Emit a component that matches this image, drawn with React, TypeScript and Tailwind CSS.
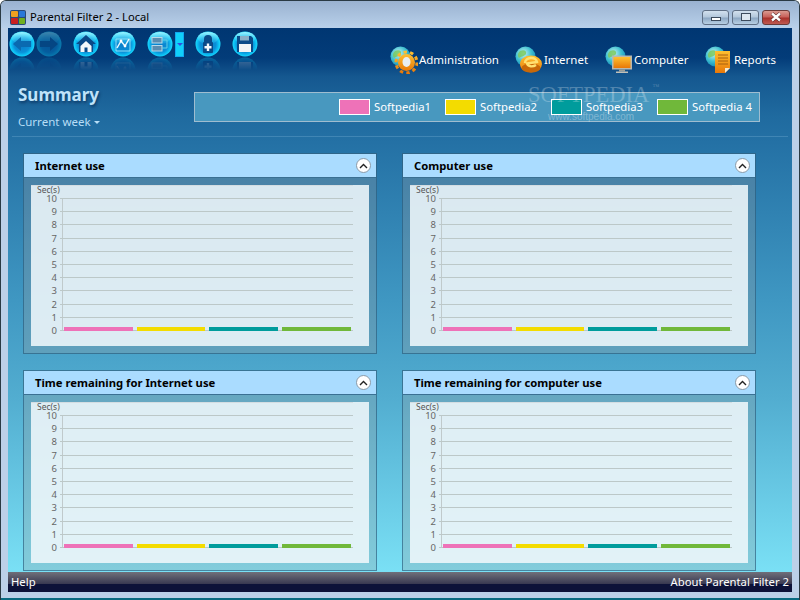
import type { ReactNode } from "react";

const legend = [
  { label: "Softpedia1", color: "bg-[#ee72b8]" },
  { label: "Softpedia2", color: "bg-[#f3dc00]" },
  { label: "Softpedia3", color: "bg-[#009c9c]" },
  { label: "Softpedia 4", color: "bg-[#70b83a]" },
];

const bars = [
  { x: 33, w: 69, fill: "#ee72b8" },
  { x: 106, w: 68, fill: "#f3dc00" },
  { x: 178, w: 69, fill: "#009c9c" },
  { x: 251, w: 69, fill: "#70b83a" },
];

function Orb({ children, dim }: { children: ReactNode; dim?: boolean }) {
  const face = (
    <svg width="26" height="26" viewBox="0 0 26 26" className={dim ? "opacity-40" : ""}>
      <defs>
        <radialGradient id="orb-face" cx="50%" cy="52%" r="52%">
          <stop offset="0%" stopColor="#0b7cc8" />
          <stop offset="60%" stopColor="#0a90d8" />
          <stop offset="82%" stopColor="#0cc0f4" />
          <stop offset="100%" stopColor="#20e0ff" />
        </radialGradient>
        <linearGradient id="orb-gloss" x1="0" y1="0" x2="0" y2="1">
          <stop offset="0%" stopColor="#a0f4ff" stopOpacity="1" />
          <stop offset="100%" stopColor="#20c8f4" stopOpacity="0.2" />
        </linearGradient>
      </defs>
      <circle cx="13" cy="13" r="12.5" fill="url(#orb-face)" />
      <ellipse cx="13" cy="7" rx="10.5" ry="6" fill="url(#orb-gloss)" />
      {children}
    </svg>
  );
  return (
    <div className="flex w-[26px] flex-col">
      <div className="h-[26px]">{face}</div>
      <div className="h-[13px] -scale-y-100 overflow-hidden opacity-30 [mask-image:linear-gradient(to_top,black,transparent)]">
        <div className="-mt-[13px]">{face}</div>
      </div>
    </div>
  );
}

function TitleButton({ kind }: { kind: "min" | "max" | "close" }) {
  const look =
    kind === "close"
      ? "w-[28px] border-[#6b3a38] bg-[linear-gradient(#d99a90,#c8615a_45%,#a8322c_55%,#c05a50)]"
      : "w-[27px] border-[#5f6f85] bg-[linear-gradient(#d2e0ee,#b4c8dc_45%,#8ea8c4_55%,#b8d0e4)]";
  return (
    <div className={`flex h-[15px] items-center justify-center rounded-[3px] border ${look}`}>
      {kind === "min" && <div className="mt-[4px] h-[4px] w-[10px] border border-[#3c4a5c] bg-white" />}
      {kind === "max" && <div className="h-[8px] w-[10px] border border-[#3c4a5c] bg-[#dce6f0]" />}
      {kind === "close" && (
        <svg width="14" height="10" viewBox="0 0 14 10">
          <path d="M3 1.5 L11 8.5 M11 1.5 L3 8.5" stroke="#4a2020" strokeWidth="3.6" />
          <path d="M3 1.5 L11 8.5 M11 1.5 L3 8.5" stroke="#fff" strokeWidth="2.4" />
        </svg>
      )}
    </div>
  );
}

function Globe() {
  return (
    <>
      <defs>
        <radialGradient id="globe" cx="40%" cy="35%" r="70%">
          <stop offset="0%" stopColor="#c8f4f4" />
          <stop offset="55%" stopColor="#40c0d0" />
          <stop offset="100%" stopColor="#1088b8" />
        </radialGradient>
        <linearGradient id="orange" x1="0" y1="0" x2="0" y2="1">
          <stop offset="0%" stopColor="#ffc030" />
          <stop offset="100%" stopColor="#e87808" />
        </linearGradient>
      </defs>
      <circle cx="10.5" cy="10.5" r="10" fill="url(#globe)" />
      <path d="M5 5 C9 3 12 5 11 8 C9 11 6 10 4 12 C2 9 3 7 5 5Z" fill="#78c858" opacity="0.8" />
    </>
  );
}

function NavIcon({ kind }: { kind: string }) {
  return (
    <svg width="28" height="28" viewBox="0 0 28 28">
      <Globe />
      {kind === "gear" && (
        <g>
          <circle cx="16.5" cy="16.5" r="10.5" fill="none" stroke="url(#orange)" strokeWidth="3" strokeDasharray="3.4 3.2" />
          <circle cx="16.5" cy="16.5" r="8.5" fill="url(#orange)" />
          <ellipse cx="16.5" cy="16" rx="4" ry="5" fill="#e8eef2" />
        </g>
      )}
      {kind === "ie" && (
        <g>
          <ellipse cx="16" cy="18" rx="11" ry="8.5" fill="url(#orange)" />
          <ellipse cx="16" cy="22" rx="9.5" ry="4.5" fill="#c86808" />
          <path d="M10 17 C10 11 21 10 22 16 L12 17.5 C13 21 18 21 21 19" fill="none" stroke="#ffe070" strokeWidth="2.4" />
        </g>
      )}
      {kind === "monitor" && (
        <g>
          <rect x="7" y="9.5" width="20" height="14" fill="#b8b8b0" />
          <rect x="8.5" y="11" width="17" height="11" fill="url(#orange)" />
          <rect x="14" y="23.5" width="6" height="2" fill="#a0a098" />
          <rect x="11" y="25.5" width="12" height="1.5" fill="#c0c0b8" />
        </g>
      )}
      {kind === "doc" && (
        <g>
          <path d="M10 5 H25 V22 L20 27 H10 Z" fill="url(#orange)" />
          <path d="M20 27 V22 H25 Z" fill="#f4e8d0" />
          <path d="M13 9 H23 M13 12 H23 M13 15 H23 M13 18 H23" stroke="#a86010" strokeWidth="1" />
        </g>
      )}
    </svg>
  );
}

function NavItem({ icon, label, className }: { icon: string; label: string; className: string }) {
  return (
    <div className={`flex items-center gap-[1px] ${className}`}>
      <NavIcon kind={icon} />
      <span className="text-[11.5px] leading-none text-white">{label}</span>
    </div>
  );
}

function Chart() {
  return (
    <svg width="338" height="161" viewBox="0 0 338 161" className="block font-['Noto_Sans',sans-serif]">
      <line x1="0" y1="0.5" x2="322" y2="0.5" stroke="#d4dde2" />
      <text x="6" y="8" fontSize="8.5" fill="#555">
        Sec(s)
      </text>
      <line x1="31.5" y1="14" x2="31.5" y2="146" stroke="#c0cacc" />
      {[10, 9, 8, 7, 6, 5, 4, 3, 2, 1, 0].map((n, i) => {
        const y = Math.round(13 + i * 13.2) + 0.5;
        return (
          <g key={n}>
            <line x1="29" y1={y} x2="322" y2={y} stroke="#bcc8c8" />
            <text x="26" y={y + 3.5} fontSize="9.5" textAnchor="end" fill="#666">
              {n}
            </text>
          </g>
        );
      })}
      {bars.map((b) => (
        <rect key={b.x} x={b.x} y="142" width={b.w} height="4" fill={b.fill} />
      ))}
    </svg>
  );
}

function Panel({ title }: { title: string }) {
  return (
    <section className="h-[201px] border border-[rgba(30,85,120,0.6)] bg-[rgba(155,155,155,0.28)]">
      <header className="flex h-[24px] items-center justify-between border-b border-[rgba(30,85,120,0.8)] bg-[#aadcff] pr-[5px] pl-[11px]">
        <h2 className="text-[11.25px] leading-none font-bold text-black">{title}</h2>
        <button className="flex h-[15px] w-[15px] items-center justify-center rounded-full border border-[#8a9aa8] bg-white">
          <svg width="9" height="6" viewBox="0 0 9 6">
            <path d="M1 5 L4.5 1.5 L8 5" fill="none" stroke="#222" strokeWidth="1.4" />
          </svg>
        </button>
      </header>
      <div className="px-[7px] pt-[7px]">
        <div className="bg-[rgba(240,248,252,0.87)]">
          <Chart />
        </div>
      </div>
    </section>
  );
}

export default function App() {
  return (
    <div className="relative flex h-[600px] w-[800px] flex-col overflow-hidden rounded-t-[6px] border-x border-t border-[#2a3a44] bg-[#bcd0e8] font-['Noto_Sans',sans-serif]">
      <div className="flex h-[27px] shrink-0 items-center justify-between bg-[linear-gradient(#9ab2d0,#b8d0ea)] px-[9px] pt-[5px]">
        <div className="flex items-center gap-[4px]">
          <div className="grid h-[15px] w-[16px] grid-cols-2 gap-[1px] rounded-[2px] bg-[#2a4a78] p-[1px]">
            <div className="rounded-[1px] bg-[#f0a020]" />
            <div className="rounded-[1px] bg-[#2878d8]" />
            <div className="rounded-[1px] bg-[#c82020]" />
            <div className="rounded-[1px] bg-[#70b020]" />
          </div>
          <span className="text-[11.2px] leading-none text-black">Parental Filter 2 - Local</span>
        </div>
        <div className="flex items-center gap-[3px]">
          <TitleButton kind="min" />
          <TitleButton kind="max" />
          <TitleButton kind="close" />
        </div>
      </div>

      <main className="mx-[7px] flex min-h-0 flex-1 flex-col bg-[linear-gradient(#003672,#033c79_5.5%,#155890_9%,#1f6a9f_16%,#2471a5_21%,#3f97c2_50%,#52add0_68%,#7ae0f5)]">
        <div className="flex h-[52px] shrink-0 items-start justify-between">
          <div className="flex items-start pt-[3px] pl-[1px]">
            <Orb>
              <path d="M4 13 L12 6 V10 H22 V16 H12 V20 Z" fill="#0a6ab0" />
            </Orb>
            <div className="ml-[1px]">
              <Orb dim>
                <path d="M22 13 L14 6 V10 H4 V16 H14 V20 Z" fill="#0a5a98" />
              </Orb>
            </div>
            <div className="ml-[11px]">
              <Orb>
                <path d="M13 4 L23 13 H20 V21 H6 V13 H3 Z" fill="#0a4a88" />
                <path d="M13 10 L18.5 15 V21 H7.5 V15 Z" fill="#f4f8fa" />
                <rect x="11.5" y="16.5" width="3" height="4.5" fill="#0a4a88" />
              </Orb>
            </div>
            <div className="ml-[11px]">
              <Orb>
                <path d="M6 8 V20 H20 M6 8 H20 V20" fill="none" stroke="#8ce0f8" strokeWidth="1" />
                <path d="M7 17 L11 10 L15 15 L19 8" fill="none" stroke="#e8f8ff" strokeWidth="1.5" />
                <circle cx="11" cy="10" r="1.4" fill="#fff" />
                <circle cx="15" cy="15" r="1.4" fill="#fff" />
              </Orb>
            </div>
            <div className="ml-[11px]">
              <Orb>
                <rect x="5" y="6.5" width="10" height="5.5" fill="#5a8cb0" stroke="#b8d8e8" />
                <rect x="5" y="14.5" width="10" height="5.5" fill="#5a8cb0" stroke="#b8d8e8" />
                <path d="M15 9 H20 V17 H15" fill="none" stroke="#60d0e8" />
              </Orb>
            </div>
            <div className="mt-[1px] ml-[2px] flex h-[25px] w-[9px] items-center justify-center border border-[#10a8f0] bg-[#10d0fa]">
              <div className="h-0 w-0 border-x-[3px] border-t-[3px] border-x-transparent border-t-[#3050e0]" />
            </div>
            <div className="ml-[11px]">
              <Orb>
                <path d="M9 11 V8 A4 4 0 0 1 17 8 V11 Z" fill="#0a4a88" />
                <rect x="8" y="11" width="10" height="11" rx="1" fill="#0a4a88" />
                <path d="M13 12.5 V20 M9.5 16.2 H16.5" stroke="#f4f8fa" strokeWidth="2.4" />
              </Orb>
            </div>
            <div className="ml-[11px]">
              <Orb>
                <path d="M5 5 H19 L21 7 V21 H5 Z" fill="#0a4a88" />
                <rect x="8" y="5" width="9" height="4.5" fill="#8ab0c8" />
                <rect x="7" y="13" width="12" height="8" fill="#f0f4f6" />
              </Orb>
            </div>
          </div>
          <div className="flex pt-[18px] pr-[16px]">
            <NavItem icon="gear" label="Administration" className="w-[125px]" />
            <NavItem icon="ie" label="Internet" className="w-[90px]" />
            <NavItem icon="monitor" label="Computer" className="w-[100px]" />
            <NavItem icon="doc" label="Reports" className="" />
          </div>
        </div>

        <div className="mx-[4px] flex h-[57px] shrink-0 justify-between border-b border-[rgba(150,200,230,0.25)] pr-[28px]">
          <div className="pl-[6px]">
            <h1 className="mt-[3px] text-[17px] leading-[24px] font-bold text-[#bfe2fa] [text-shadow:1px_2px_3px_rgba(0,30,70,0.6)]">
              Summary
            </h1>
            <button className="mt-[7px] flex items-center gap-[3px] text-[11.5px] leading-[16px] text-[#b8def6]">
              Current week
              <span className="h-0 w-0 border-x-[3px] border-t-[3px] border-x-transparent border-t-[#b8def6]" />
            </button>
          </div>
          <div className="mt-[12px] flex h-[30px] w-[566px] items-center border border-[#9fbdd0] bg-[#4898bf] pl-[144px]">
            {legend.map((item) => (
              <div key={item.label} className="flex w-[106px] shrink-0 items-center gap-[4px]">
                <div className={`h-[16px] w-[31px] shrink-0 border border-white ${item.color}`} />
                <span className="text-[11.3px] leading-none whitespace-nowrap text-white">{item.label}</span>
              </div>
            ))}
          </div>
        </div>

        <div className="grid grid-cols-[354px_354px] gap-x-[25px] gap-y-[16px] pt-[16px] pl-[15px]">
          <Panel title="Internet use" />
          <Panel title="Computer use" />
          <Panel title="Time remaining for Internet use" />
          <Panel title="Time remaining for computer use" />
        </div>
      </main>

      <footer className="mx-[7px] flex h-[20px] shrink-0 items-center justify-between bg-[linear-gradient(#70707a,#3a3a52_58%,#0d1238_60%)] px-[3px] text-[11.3px] leading-none text-white">
        <span>Help</span>
        <span>About Parental Filter 2</span>
      </footer>
      <div className="h-[8px] shrink-0 border-b-2 border-[#0a6a80]" />

      <div className="absolute top-[83px] left-[527px] text-[22.5px] leading-none text-white/25 font-['Liberation_Serif',serif]">
        SOFTPEDIA
        <span className="absolute top-0 -right-[10px] text-[7px]">™</span>
      </div>
      <div className="absolute top-[111px] left-[547px] text-[10px] leading-none text-white/30 font-['Liberation_Sans',sans-serif]">
        www.softpedia.com
      </div>
    </div>
  );
}
